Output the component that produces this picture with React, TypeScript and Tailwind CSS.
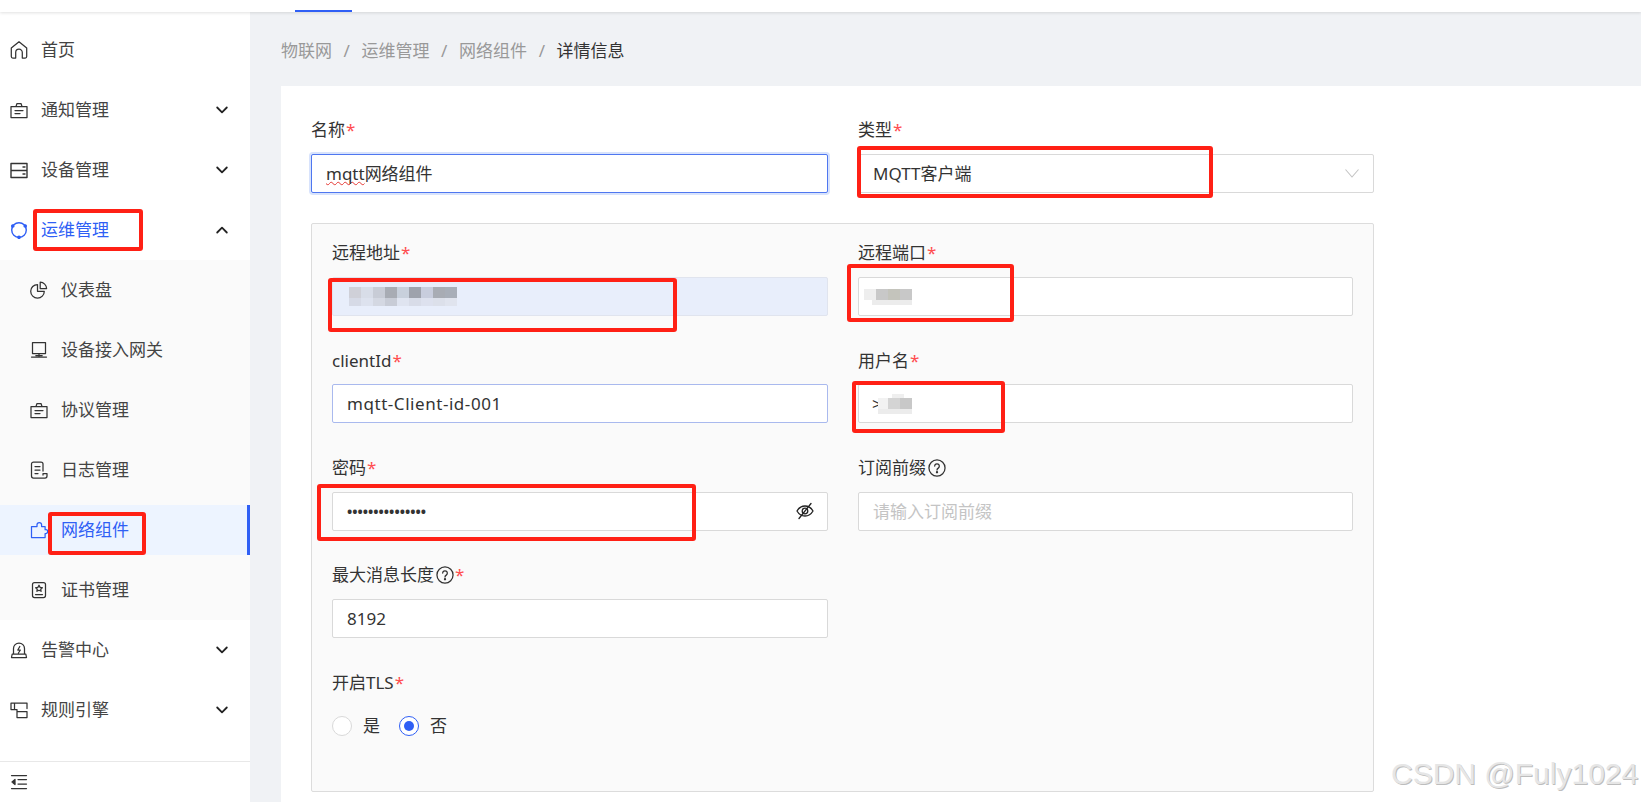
import type { ReactNode } from "react";

const ink = "#333333";
const blue = "#2f5ff5";

function Ico({ children, color = ink }: { children: ReactNode; color?: string }) {
  return (
    <svg
      width="18"
      height="18"
      viewBox="0 0 18 18"
      fill="none"
      stroke={color}
      strokeWidth="1.25"
      strokeLinecap="round"
      strokeLinejoin="round"
      className="shrink-0"
    >
      {children}
    </svg>
  );
}

const HomeIcon = () => (
  <Ico>
    <path d="M1.300 7 9 .8 16.700 7v8.500a1.500 1.500 0 0 1-1.500 1.500H12.300v-5.500a3.300 3.300 0 0 0-6.600 0V17H2.800a1.500 1.500 0 0 1-1.500-1.500z" />
  </Ico>
);
const NoticeIcon = ({ color = ink }: { color?: string }) => (
  <Ico color={color}>
    <path d="M1 5.500h16v11H1zM6 5.500 7 2.500h4l1 3M5 9.500h8M5 12.500h5" />
  </Ico>
);
const RackIcon = () => (
  <Ico>
    <path d="M1 2.500h16v14H1zM1 9.500h16M13 6h2M13 13h2" strokeWidth="1.4" />
  </Ico>
);
const OpsIcon = () => (
  <Ico color={blue}>
    <circle cx="9" cy="9" r="7.300" strokeWidth="1.4" />
    <circle cx="2.800" cy="5" r="1.200" fill={blue} />
    <circle cx="15.200" cy="5" r="1.200" fill={blue} />
    <circle cx="9" cy="16.300" r="1.200" fill={blue} />
  </Ico>
);
const PieIcon = () => (
  <Ico>
    <path d="M7.500 3.500a6.800 6.800 0 1 0 6.800 6.800H7.500z" />
    <path d="M10.200 1.200a6.600 6.600 0 0 1 6.400 6.400h-6.400z" />
  </Ico>
);
const MonitorIcon = () => (
  <Ico>
    <path d="M2.500 1.500h13v11h-13zM9 12.500v2.500M1.500 16h15" />
    <path d="M6 14.800h6" strokeWidth="1.6" />
  </Ico>
);
const DocIcon = () => (
  <Ico>
    <path d="M13 10V3a2 2 0 0 0-2-2H3.500a2 2 0 0 0-2 2v12a2 2 0 0 0 2 2H15a2 2 0 0 0 2-2v-2.500h-4V14M5 5.500h5M5 9h5M5 12.500h3" />
  </Ico>
);
const PuzzleIcon = () => (
  <Ico color={blue}>
    <path d="M1.500 5.500H7V3.800a2.300 2.300 0 0 1 4.600 0v1.700h3.500v3.200h.7a1.900 1.900 0 0 1 0 3.800h-.7v4H1.500z" />
  </Ico>
);
const CertIcon = () => (
  <Ico>
    <rect x="2.500" y="1.500" width="13" height="15" rx="2" />
    <path d="M9 4.200l1.100 2.200 2.200.3-1.600 1.500.4 2.100L9 9.300l-2.100 1 .4-2.100-1.600-1.500 2.200-.3zM5.500 13.500h7" />
  </Ico>
);
const AlarmIcon = () => (
  <Ico>
    <path d="M3.500 13V7.500a5.500 5.500 0 0 1 11 0V13M1.500 16.500l.7-3.500h13.600l.7 3.500zM9.800 5.500 7.800 9h2.600l-2 3" />
  </Ico>
);
const RuleIcon = () => (
  <Ico>
    <path d="M1 2h16v5.500M1 2v6.500h6M4.500 2.200v6.200M7 8.500v8h10v-6H7" />
  </Ico>
);
const CollapseIcon = () => (
  <Ico>
    <path d="M1.500 2.500h15M8 6.500h8.500M8 11h8.500M1.500 15.500h15" />
    <path d="M5 6.500v5L2 9z" fill={ink} />
  </Ico>
);

const Chevron = ({ up }: { up?: boolean }) => (
  <svg width="14" height="14" viewBox="0 0 14 14" fill="none" stroke="#222222" strokeWidth="1.8" strokeLinecap="round" strokeLinejoin="round">
    <path d={up ? "M2.200 9.500 7 4.700l4.800 4.800" : "M2.200 4.500 7 9.300l4.800-4.800"} />
  </svg>
);

const Help = () => (
  <svg width="18" height="18" viewBox="0 0 17 17" fill="none" stroke="#333333" strokeWidth="1.2" strokeLinecap="round" className="ml-[2px] shrink-0">
    <circle cx="8.500" cy="8.500" r="7.600" />
    <path d="M6.300 6.700a2.200 2.200 0 1 1 3.400 1.900c-.8.500-1.200.9-1.200 1.800" />
    <circle cx="8.500" cy="12.500" r=".5" fill="#333333" />
  </svg>
);

function NavRow({ icon, label, chevron, active }: { icon: ReactNode; label: string; chevron?: "up" | "down"; active?: boolean }) {
  return (
    <div className="flex h-[60px] items-center pl-[10px] pr-[21px]">
      {icon}
      <span className={`ml-[13px] flex-1 text-[17px] ${active ? "text-[#2f5ff5]" : "text-[#444444]"}`}>{label}</span>
      {chevron && <Chevron up={chevron === "up"} />}
    </div>
  );
}

function SubRow({ icon, label, active }: { icon: ReactNode; label: string; active?: boolean }) {
  return (
    <div className="py-[5px]">
      <div
        className={`flex h-[50px] items-center pl-[30px] ${
          active ? "border-r-[3px] border-[#2f5ff5] bg-[#edf4ff] text-[#2f5ff5]" : "text-[#444444]"
        }`}
      >
        {icon}
        <span className="ml-[13px] text-[17px]">{label}</span>
      </div>
    </div>
  );
}

function Sidebar() {
  return (
    <aside className="flex w-[250px] shrink-0 flex-col bg-white pt-[8px]">
      <NavRow icon={<HomeIcon />} label="首页" />
      <NavRow icon={<NoticeIcon />} label="通知管理" chevron="down" />
      <NavRow icon={<RackIcon />} label="设备管理" chevron="down" />
      <NavRow icon={<OpsIcon />} label="运维管理" chevron="up" active />
      <div className="bg-[#fafafa]">
        <SubRow icon={<PieIcon />} label="仪表盘" />
        <SubRow icon={<MonitorIcon />} label="设备接入网关" />
        <SubRow icon={<NoticeIcon />} label="协议管理" />
        <SubRow icon={<DocIcon />} label="日志管理" />
        <SubRow icon={<PuzzleIcon />} label="网络组件" active />
        <SubRow icon={<CertIcon />} label="证书管理" />
      </div>
      <NavRow icon={<AlarmIcon />} label="告警中心" chevron="down" />
      <NavRow icon={<RuleIcon />} label="规则引擎" chevron="down" />
      <div className="mt-auto flex h-[41px] items-center border-t border-[#e8e8e8] pl-[10px]">
        <CollapseIcon />
      </div>
    </aside>
  );
}

function Label({ text, required = true, help }: { text: string; required?: boolean; help?: boolean }) {
  return (
    <div className="mb-[10px] flex h-[28px] items-center text-[17px] text-[#333333]">
      <span>{text}</span>
      {help && <Help />}
      {required && <span className="ml-[1px] text-[#ff4d4f]">*</span>}
    </div>
  );
}

function Box({ children, className = "bg-white border-[#d9d9d9]" }: { children?: ReactNode; className?: string }) {
  return (
    <div className={`flex h-[39px] items-center rounded-[2px] border px-[14px] text-[17px] text-[#333333] ${className}`}>{children}</div>
  );
}

const addrTop = ["bg-[#cfd0d8]", "bg-[#d8dde8]", "bg-[#c8ccd6]", "bg-[#a8acb4]", "bg-[#c8d0dc]", "bg-[#9ea2ac]", "bg-[#c8cddd]", "bg-[#a8acb4]", "bg-[#a8aeb8]"];
const addrBottom = ["bg-[#d6dae6]", "bg-[#dde2ee]", "bg-[#d4d8e2]", "bg-[#c8ccd6]", "bg-[#dfe4f0]", "bg-[#d8dce8]", "bg-[#dde1ee]", "bg-[#dce0ea]", "bg-[#e0e4ee]"];

function AddressBlur() {
  return (
    <div className="ml-[2px] flex flex-col">
      <div className="flex">
        {addrTop.map((c, i) => (
          <span key={i} className={`h-[11px] w-[12px] ${c}`} />
        ))}
      </div>
      <div className="flex">
        {addrBottom.map((c, i) => (
          <span key={i} className={`h-[8px] w-[12px] ${c}`} />
        ))}
      </div>
    </div>
  );
}

function PortBlur() {
  return (
    <div className="-ml-[9px] flex flex-col">
      <div className="flex">
        <span className="h-[11px] w-[12px] bg-[#eeeeee]" />
        <span className="h-[11px] w-[12px] bg-[#c8c8c8]" />
        <span className="h-[11px] w-[12px] bg-[#c4c4bc]" />
        <span className="h-[11px] w-[12px] bg-[#c8c8c8]" />
      </div>
      <div className="ml-[8px] h-[5px] w-[40px] bg-[#ececec]" />
    </div>
  );
}

function UserBlur() {
  return (
    <div className="-ml-[1px] flex items-center">
      <span className="text-[17px] leading-none text-[#333333]">&gt;</span>
      <div className="-ml-[4px] flex flex-col">
        <div className="ml-[14px] h-[4px] w-[12px] bg-[#efefef]" />
        <div className="flex">
          <span className="h-[11px] w-[10px] bg-[#f2f2f2]" />
          <span className="h-[11px] w-[12px] bg-[#d4d4d4]" />
          <span className="h-[11px] w-[12px] bg-[#c8c8c8]" />
        </div>
        <div className="h-[5px] w-[34px] bg-[#ececec]" />
      </div>
    </div>
  );
}

function EyeOff() {
  return (
    <svg width="18" height="18" viewBox="0 0 18 18" fill="none" stroke="#222222" strokeWidth="1.3" strokeLinecap="round" className="-mr-[1px] ml-auto shrink-0">
      <path d="M1 9c2-3.400 4.800-5 8-5s6 1.600 8 5c-2 3.400-4.800 5-8 5s-6-1.600-8-5z" />
      <circle cx="9" cy="9" r="2.800" />
      <path d="M15 1.500 3 16.500" />
    </svg>
  );
}

function Radio({ label, checked }: { label: string; checked?: boolean }) {
  return (
    <div className="flex items-center gap-[11px]">
      <span
        className={`flex h-[20px] w-[20px] items-center justify-center rounded-full border bg-white ${
          checked ? "border-[#2f5ff5]" : "border-[#d9d9d9]"
        }`}
      >
        {checked && <span className="h-[10px] w-[10px] rounded-full bg-[#2f5ff5]" />}
      </span>
      <span className="text-[17px] text-[#333333]">{label}</span>
    </div>
  );
}

function Form() {
  return (
    <section className="ml-[30px] w-[1063px] pt-[30px]">
      <div className="grid grid-cols-[517px_516px] gap-x-[30px]">
        <div>
          <Label text="名称" />
          <Box className="border-[#4f77f0] bg-white shadow-[0_0_0_2px_#d8e3fc]">
            <span className="underline decoration-[#e53935] decoration-wavy decoration-1 [text-decoration-skip-ink:none]">mqtt</span>
            <span>网络组件</span>
          </Box>
        </div>
        <div>
          <Label text="类型" />
          <Box>
            <span>MQTT客户端</span>
            <svg width="14" height="9" viewBox="0 0 14 9" fill="none" stroke="#c4c4c4" strokeWidth="1.1" className="ml-auto">
              <path d="M.5.500 7 8 13.500.500" />
            </svg>
          </Box>
        </div>
      </div>

      <div className="mt-[30px] h-[569px] rounded-[2px] border border-[#dcdcdc] bg-[#fafafa] px-[20px] pt-[15px]">
        <div className="grid grid-cols-[496px_495px] gap-x-[30px] gap-y-[30.4px]">
          <div>
            <Label text="远程地址" />
            <Box className="border-[#e0e4ee] bg-[#e8eefb]">
              <AddressBlur />
            </Box>
          </div>
          <div>
            <Label text="远程端口" />
            <Box>
              <PortBlur />
            </Box>
          </div>
          <div>
            <Label text="clientId" />
            <Box className="border-[#a9b9ee] bg-white">
              <span className="tracking-[0.55px]">mqtt-Client-id-001</span>
            </Box>
          </div>
          <div>
            <Label text="用户名" />
            <Box>
              <UserBlur />
            </Box>
          </div>
          <div>
            <Label text="密码" />
            <Box>
              <span className="text-[14px] font-bold">•••••••••••••••</span>
              <EyeOff />
            </Box>
          </div>
          <div>
            <Label text="订阅前缀" required={false} help />
            <Box>
              <span className="text-[#c4c4c4]">请输入订阅前缀</span>
            </Box>
          </div>
          <div>
            <Label text="最大消息长度" help />
            <Box>8192</Box>
          </div>
          <div />
          <div>
            <Label text="开启TLS" />
            <div className="flex h-[39px] items-center gap-[19px]">
              <Radio label="是" />
              <Radio label="否" checked />
            </div>
          </div>
        </div>
      </div>
    </section>
  );
}

const redBoxes = [
  "left-[33px] top-[209px] h-[42px] w-[110px]",
  "left-[48px] top-[512px] h-[43px] w-[98px]",
  "left-[857px] top-[146px] h-[52px] w-[356px]",
  "left-[328px] top-[278px] h-[54px] w-[349px]",
  "left-[847px] top-[264px] h-[58px] w-[167px]",
  "left-[852px] top-[381px] h-[52px] w-[153px]",
  "left-[317px] top-[484px] h-[57px] w-[379px]",
];

export default function App() {
  return (
    <div className="relative flex h-screen w-screen flex-col overflow-hidden bg-[#f0f2f5] font-['Noto_Sans','Noto_Sans_CJK_SC',sans-serif]">
      <header className="relative z-10 h-[12px] shrink-0 bg-white shadow-[0_1px_3px_rgba(0,0,0,0.12)]">
        <div className="ml-[295px] mt-[10px] h-[2px] w-[57px] bg-[#2f5ff5]" />
      </header>
      <div className="flex min-h-0 flex-1">
        <Sidebar />
        <main className="flex min-w-0 flex-1 flex-col">
          <nav className="flex h-[74px] shrink-0 items-center gap-[11.6px] pl-[31px] pt-[3px] text-[17px] text-[#999999]">
            <span>物联网</span>
            <span>/</span>
            <span>运维管理</span>
            <span>/</span>
            <span>网络组件</span>
            <span>/</span>
            <span className="text-[#333333]">详情信息</span>
          </nav>
          <div className="ml-[31px] flex-1 bg-white">
            <Form />
          </div>
        </main>
      </div>

      {redBoxes.map((c) => (
        <div key={c} className={`pointer-events-none absolute rounded-[3px] border-[4px] border-[#ff2015] ${c}`} />
      ))}

      <div className="pointer-events-none absolute left-[1391px] top-[757px] whitespace-nowrap font-['Liberation_Sans',sans-serif] text-[30px] leading-[34px] text-[#e6e6e6] [text-shadow:1px_1px_0_#bdbdbd]">
        CSDN @Fuly1024
      </div>
    </div>
  );
}
